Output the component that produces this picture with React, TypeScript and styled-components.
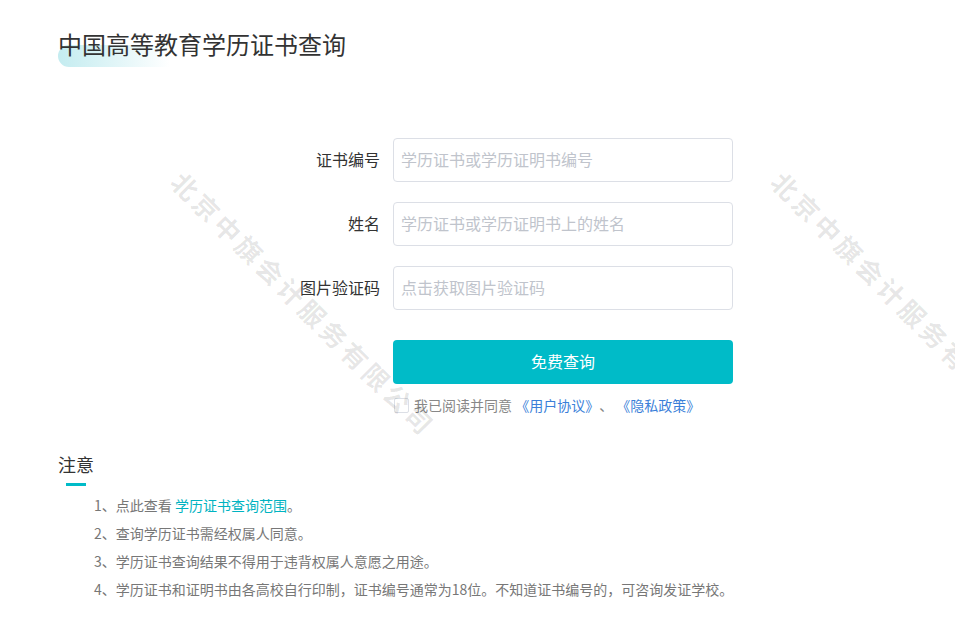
import React, { FC } from 'react';
import styled, { createGlobalStyle } from 'styled-components';

const GlobalStyle = createGlobalStyle`
  html, body {
    margin: 0;
    padding: 0;
    background: #fff;
    font-family: "Noto Sans CJK SC", "Noto Sans", "Liberation Sans", sans-serif;
    color: #333;
  }
`;

const Page = styled.div`
  position: relative;
  width: 955px;
  height: 627px;
  overflow: hidden;
  padding: 28px 0 0 58px;
  box-sizing: border-box;
`;

const Title = styled.h1`
  position: relative;
  display: inline-block;
  margin: 0;
  font-size: 24px;
  font-weight: normal;
  line-height: 32px;
  color: #333;
  z-index: 1;
  &::before {
    content: '';
    position: absolute;
    left: 0;
    top: 17px;
    width: 112px;
    height: 22px;
    border-radius: 11px 0 0 11px;
    background: linear-gradient(90deg, #c4ecf0 0%, #e3f6f8 55%, rgba(255, 255, 255, 0) 100%);
    z-index: -1;
  }
`;

const Form = styled.form`
  display: grid;
  grid-template-columns: 322px 340px;
  column-gap: 13px;
  row-gap: 20px;
  margin-top: 78px;
`;

const Label = styled.label`
  justify-self: end;
  align-self: center;
  padding-bottom: 3px;
  font-size: 16px;
  color: #333;
`;

const Input = styled.input`
  box-sizing: border-box;
  width: 340px;
  height: 44px;
  padding: 0 7px 3px;
  border: 1px solid #dcdfe6;
  border-radius: 4px;
  font-family: inherit;
  font-size: 16px;
  color: #333;
  outline: none;
  &::placeholder {
    color: #c0c4cc;
  }
`;

const ButtonCell = styled.div`
  grid-column: 2;
  margin-top: 10px;
  display: flex;
  flex-direction: column;
  gap: 13px;
`;

const SubmitButton = styled.button`
  width: 340px;
  height: 44px;
  padding: 0 0 3px;
  border: none;
  border-radius: 4px;
  background: #00bbc8;
  color: #fff;
  font-family: inherit;
  font-size: 16px;
  cursor: pointer;
`;

const Agree = styled.div`
  display: flex;
  align-items: center;
  font-size: 14px;
  color: #888;
  line-height: 16px;
`;

const Box = styled.span`
  display: inline-block;
  width: 13px;
  height: 13px;
  border: 1px solid #dcdfe6;
  border-radius: 2px;
  margin: 0 5px 0 1px;
  background: #fff;
`;

const Link = styled.a<{ $tone?: 'blue' | 'cyan' }>`
  color: ${(p) => (p.$tone === 'cyan' ? '#00b3c1' : '#3b7fd9')};
  text-decoration: none;
  cursor: pointer;
`;

const Notice = styled.section`
  margin-top: 39px;
`;

const NoticeTitle = styled.h2`
  margin: 0;
  font-size: 18px;
  font-weight: normal;
  line-height: 24px;
  color: #333;
`;

const NoticeBar = styled.div`
  width: 20px;
  height: 3px;
  margin: 7px 0 0 8px;
  background: #00bbc8;
`;

const NoticeList = styled.ol`
  list-style: none;
  margin: 9px 0 0 36px;
  padding: 0;
  display: flex;
  flex-direction: column;
  gap: 8px;
`;

const NoticeItem = styled.li`
  font-size: 14px;
  line-height: 20px;
  color: #777;
`;

const Watermark = styled.span<{ $x: number; $y: number }>`
  position: absolute;
  left: ${(p) => p.$x}px;
  top: ${(p) => p.$y}px;
  transform: rotate(45deg);
  transform-origin: 0 0;
  white-space: nowrap;
  font-size: 26px;
  font-weight: bold;
  letter-spacing: 4px;
  color: rgba(0, 0, 0, 0.1);
  pointer-events: none;
  user-select: none;
  z-index: 5;
`;

const fields = [
  { label: '证书编号', placeholder: '学历证书或学历证明书编号' },
  { label: '姓名', placeholder: '学历证书或学历证明书上的姓名' },
  { label: '图片验证码', placeholder: '点击获取图片验证码' },
];

const App: FC = () => (
  <>
    <GlobalStyle />
    <Page>
      <Title>中国高等教育学历证书查询</Title>
      <Form onSubmit={(e) => e.preventDefault()}>
        {fields.map((f) => (
          <React.Fragment key={f.label}>
            <Label>{f.label}</Label>
            <Input placeholder={f.placeholder} />
          </React.Fragment>
        ))}
        <ButtonCell>
          <SubmitButton type="submit">免费查询</SubmitButton>
          <Agree>
            <Box />
            我已阅读并同意&nbsp;
            <Link>《用户协议》</Link>、&nbsp;<Link>《隐私政策》</Link>
          </Agree>
        </ButtonCell>
      </Form>
      <Notice>
        <NoticeTitle>注意</NoticeTitle>
        <NoticeBar />
        <NoticeList>
          <NoticeItem>
            1、点此查看 <Link $tone="cyan">学历证书查询范围</Link>。
          </NoticeItem>
          <NoticeItem>2、查询学历证书需经权属人同意。</NoticeItem>
          <NoticeItem>3、学历证书查询结果不得用于违背权属人意愿之用途。</NoticeItem>
          <NoticeItem>
            4、学历证书和证明书由各高校自行印制，证书编号通常为18位。不知道证书编号的，可咨询发证学校。
          </NoticeItem>
        </NoticeList>
      </Notice>
      <Watermark $x={190} $y={163}>北京中旗会计服务有限公司</Watermark>
      <Watermark $x={790} $y={163}>北京中旗会计服务有限公司</Watermark>
    </Page>
  </>
);

export default App;
